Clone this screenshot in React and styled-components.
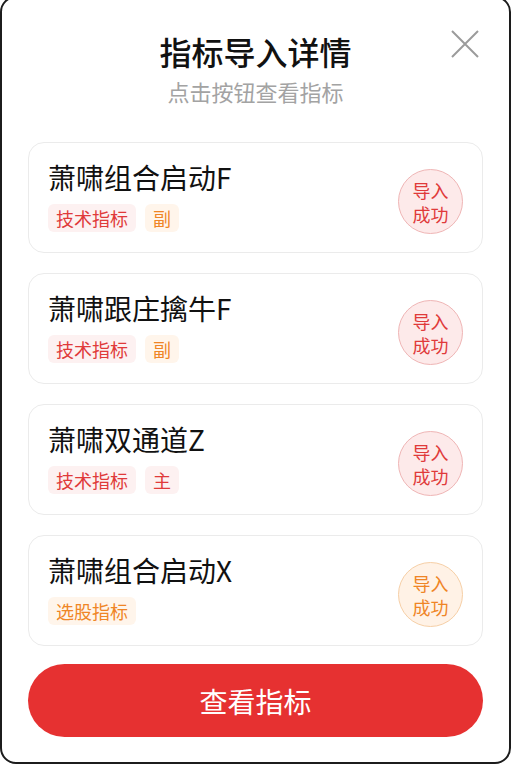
import React from "react";
import styled, { createGlobalStyle } from "styled-components";

const GlobalStyle = createGlobalStyle`
  html, body {
    margin: 0;
    padding: 0;
    background: #fff;
  }
  body {
    font-family: "Noto Sans CJK SC", "Noto Sans", sans-serif;
  }
`;

const TONES = {
  red: { text: "#e03a3a", bg: "#fdf1f1", badgeBg: "#fdeaea", badgeBorder: "#efb5b5" },
  orange: { text: "#ef8526", bg: "#fff5eb", badgeBg: "#fff2e6", badgeBorder: "#f6cfa6" },
};

const items = [
  { name: "萧啸组合启动F", tags: [{ label: "技术指标", tone: "red" }, { label: "副", tone: "orange" }], tone: "red" },
  { name: "萧啸跟庄擒牛F", tags: [{ label: "技术指标", tone: "red" }, { label: "副", tone: "orange" }], tone: "red" },
  { name: "萧啸双通道Z", tags: [{ label: "技术指标", tone: "red" }, { label: "主", tone: "red" }], tone: "red" },
  { name: "萧啸组合启动X", tags: [{ label: "选股指标", tone: "orange" }], tone: "orange" },
];

const Modal = styled.div`
  box-sizing: border-box;
  width: 511px;
  height: 768px;
  margin-top: -4px;
  border: 2px solid #1c1c1c;
  border-radius: 16px;
  background: #fff;
  padding: 0 26px 25px;
  display: flex;
  flex-direction: column;
`;

const Header = styled.header`
  position: relative;
  padding-top: 31px;
  text-align: center;
`;

const Title = styled.h1`
  margin: 0;
  font-size: 32px;
  line-height: 44px;
  font-weight: 500;
  color: #111;
`;

const Subtitle = styled.p`
  margin: 3px 0 0;
  font-size: 22px;
  line-height: 30px;
  color: #a3a3a3;
`;

const CloseButton = styled.button`
  position: absolute;
  top: 32px;
  right: 4px;
  width: 28px;
  height: 28px;
  padding: 0;
  border: none;
  background: none;
  cursor: pointer;
  display: flex;
  align-items: center;
  justify-content: center;
`;

const List = styled.div`
  display: flex;
  flex-direction: column;
  gap: 20px;
  margin-top: 36px;
`;

const Card = styled.div`
  box-sizing: border-box;
  height: 111px;
  border: 1px solid #ebebeb;
  border-radius: 16px;
  padding: 16px 19px 20px 19px;
  display: flex;
  align-items: center;
  justify-content: space-between;
`;

const Info = styled.div`
  display: flex;
  flex-direction: column;
`;

const Name = styled.div`
  font-size: 28px;
  line-height: 36px;
  color: #111;
`;

const Tags = styled.div`
  display: flex;
  gap: 9px;
  margin-top: 9px;
`;

const Tag = styled.span`
  height: 28px;
  padding: 0 8px;
  border-radius: 6px;
  font-size: 18px;
  line-height: 28px;
  color: ${(p) => TONES[p.$tone].text};
  background: ${(p) => TONES[p.$tone].bg};
`;

const Badge = styled.div`
  box-sizing: border-box;
  width: 65px;
  height: 65px;
  margin-top: 12px;
  border-radius: 50%;
  border: 1px solid ${(p) => TONES[p.$tone].badgeBorder};
  background: ${(p) => TONES[p.$tone].badgeBg};
  color: ${(p) => TONES[p.$tone].text};
  font-size: 18px;
  line-height: 24px;
  display: flex;
  flex-direction: column;
  align-items: center;
  justify-content: center;
`;

const PrimaryButton = styled.button`
  margin-top: 18px;
  height: 73px;
  border: none;
  border-radius: 37px;
  background: #e63131;
  color: #fff;
  font-family: inherit;
  font-size: 28px;
  cursor: pointer;
`;

export default function App() {
  return (
    <>
      <GlobalStyle />
      <Modal>
        <Header>
          <Title>指标导入详情</Title>
          <Subtitle>点击按钮查看指标</Subtitle>
          <CloseButton aria-label="关闭">
            <svg width="28" height="28" viewBox="0 0 28 28">
              <path d="M1 1L27 27M27 1L1 27" stroke="#9b9b9b" strokeWidth="2" fill="none" />
            </svg>
          </CloseButton>
        </Header>
        <List>
          {items.map((it) => (
            <Card key={it.name}>
              <Info>
                <Name>{it.name}</Name>
                <Tags>
                  {it.tags.map((t) => (
                    <Tag key={t.label} $tone={t.tone}>
                      {t.label}
                    </Tag>
                  ))}
                </Tags>
              </Info>
              <Badge $tone={it.tone}>
                <span>导入</span>
                <span>成功</span>
              </Badge>
            </Card>
          ))}
        </List>
        <PrimaryButton>查看指标</PrimaryButton>
      </Modal>
    </>
  );
}
